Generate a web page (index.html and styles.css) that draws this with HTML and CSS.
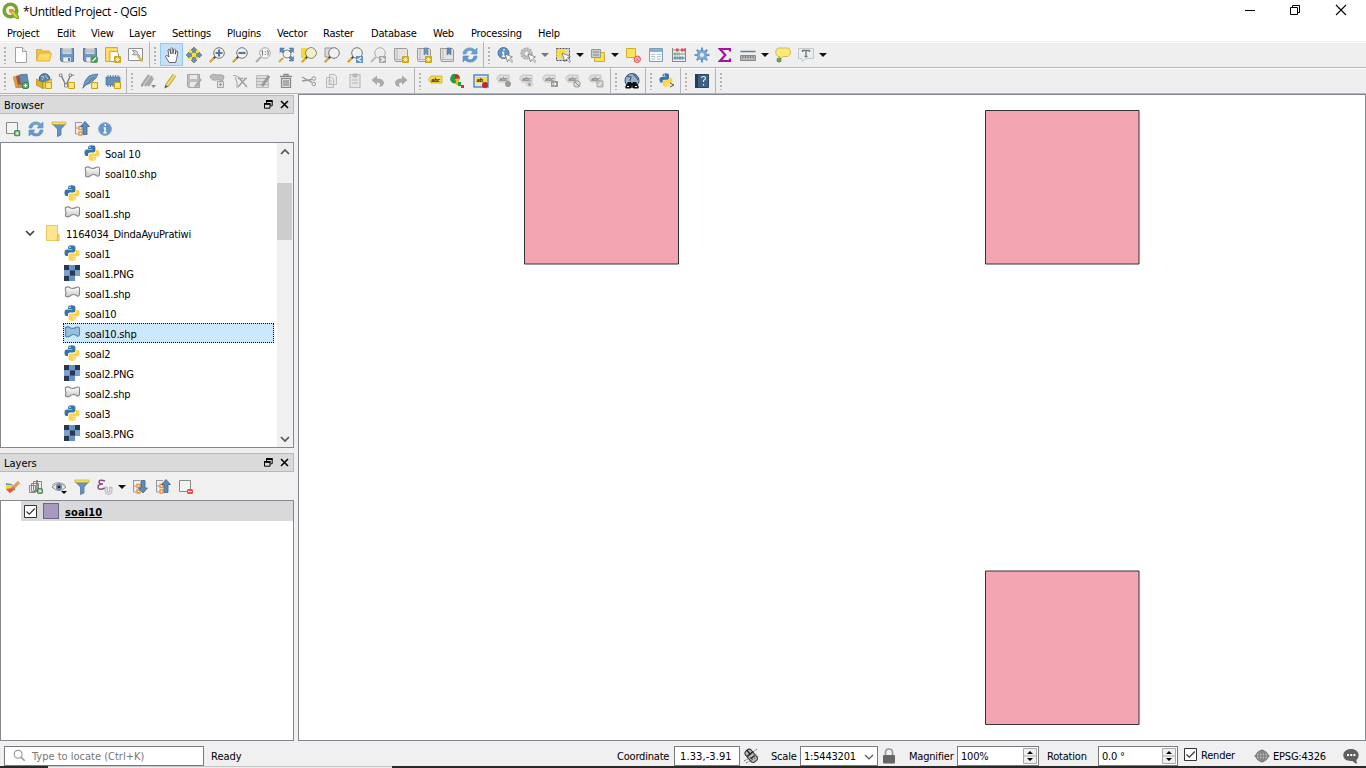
FILE: index.html
```html
<!DOCTYPE html>
<html lang="en">
<head>
<meta charset="utf-8">
<title>*Untitled Project - QGIS</title>
<link rel="stylesheet" href="styles.css">
</head>
<body>
<svg class="sprite" xmlns="http://www.w3.org/2000/svg">
<defs>
<linearGradient id="fade" x2="0" y2="1"><stop stop-color="#fff"/><stop offset="1" stop-color="#c8c8c8"/></linearGradient>
<symbol id="star" viewBox="0 0 7 7"><rect width="7" height="7" rx="1" fill="#c9a51c"/><path d="M3.500 1v5M1 3.500h5M1.800 1.800l3.400 3.400M5.200 1.800L1.800 5.200" stroke="#fff8c0" stroke-width=".8"/></symbol>
<symbol id="ysq" viewBox="0 0 7 7"><rect x=".5" y=".5" width="6" height="6" rx="1" fill="#fbe98c" stroke="#c9a21c" stroke-width="1.200"/></symbol>
<symbol id="plus" viewBox="0 0 7 7"><rect x=".5" y=".5" width="6" height="6" rx="1.500" fill="#6aa66a" stroke="#3f8248"/><path d="M3.500 1.700v3.600M1.700 3.500h3.600" stroke="#fff" stroke-width="1.200"/></symbol>
<symbol id="cursor" viewBox="0 0 10 10"><path d="M1 1l7.500 3-2.600 1.200L9 8.500 8 9.500 4.800 6.300 3.500 8.800z" fill="#fff" stroke="#777" stroke-width=".8"/></symbol>
<symbol id="new" viewBox="0 0 16 16"><path d="M2.500 .5h7L13.500 4.500v11h-11z" fill="#fff" stroke="#a0a0a0"/><path d="M9.500 .5v4h4" fill="#eee" stroke="#a0a0a0"/></symbol>
<symbol id="open" viewBox="0 0 16 16"><path d="M.5 13V2.500h5l1 1.500h7v3" fill="#efc042" stroke="#dcb04a"/><path d="M.5 14L3 6h12.500l-2 8z" fill="#ffd964" stroke="#e2b43c"/></symbol>
<symbol id="save" viewBox="0 0 16 16"><path d="M1.500 1.500h13v13h-12l-1-1z" fill="#6d97c4" stroke="#557b9e"/><path d="M3.500 1h9v6h-9z" fill="#d5d8da"/><path d="M4 10h8v5H4z" fill="#eef0f1" stroke="#7b8e9c" stroke-width=".6"/><path d="M9 11h2v3H9z" fill="#5c7f9e"/><path d="M4 3h8M4 5h8" stroke="#a9b1b6"/></symbol>
<symbol id="saveas" viewBox="0 0 16 16"><use href="#save"/><rect x="9" y="9.500" width="6.500" height="6" rx="1.500" fill="#509650" stroke="#5f9c63"/><path d="M10.500 14.200l3.500-3.500" stroke="#fff" stroke-width="1.300"/></symbol>
<symbol id="savegray" viewBox="0 0 16 16"><path d="M1.500 1.500h12v13h-11l-1-1z" fill="#bdbdbd" stroke="#a5a5a5"/><path d="M4 2h7v4H4zM4 9h7v5H4z" fill="#e9e9e9"/><path d="M9 14l6-8" stroke="#aaa" stroke-width="2.200"/></symbol>
<symbol id="layout" viewBox="0 0 16 16"><path d="M4.500 3.500h6l3 3v8h-9z" fill="#fff" stroke="#999"/><path d="M.5 .5h12v4H5v10H.5z" fill="#f6d75b" stroke="#cfae3a"/><path d="M2 3h1M5 2v1M8 2v1M11 2v1M2 6h1M2 9h1M2 12h1" stroke="#fff"/><use href="#star" x="9" y="9" width="7" height="7"/></symbol>
<symbol id="wrench" viewBox="0 0 16 16"><path d="M.5 1.500h14v12H.5z" fill="#fafafa" stroke="#919191"/><path d="M4.500 3.500l2 2-2 2q3 1 4 0l2 2 1-1-2-2q1-3-5-3z" fill="#ddd" stroke="#777" stroke-width=".8"/><path d="M10 9l4.500 5.500" stroke="#d8b548" stroke-width="2.500"/></symbol>
<symbol id="hand" viewBox="0 0 16 16"><path d="M5.200 15.500l-3.700-6q.4-1.600 2-.6L5 10 4 3q.8-1.500 2 0l1 4-.3-5.400q1-1.500 2 0L9 6.800l.6-4.300q1.300-1 1.900.3l-.2 4.500.9-3q1.500-.8 1.500.8l-1 6.400-1 4z" fill="#fff" stroke="#444" stroke-width=".8"/></symbol>
<symbol id="pan" viewBox="0 0 16 16"><path d="M2.500 2.500h10v10h-10z" fill="#f4df43" transform="rotate(8 8 8)"/><path d="M8 0l3 3H9.500v2.500h-3V3H5zM8 16l3-3H9.500v-2.500h-3V13H5zM0 8l3-3v1.500h2.500v3H3V11zM16 8l-3-3v1.500h-2.500v3H13V11z" fill="#668fb8" stroke="#426585" stroke-width=".5"/></symbol>
<symbol id="lens" viewBox="0 0 16 16"><path d="M6.500 9.500l-2 2" stroke="#444" stroke-width="1.800"/><path d="M4.500 11.500L.8 15.200" stroke="#d6a82c" stroke-width="2.300"/><circle cx="10" cy="6" r="5.300" fill="#f1f1ef" stroke="#777"/></symbol>
<symbol id="zin" viewBox="0 0 16 16"><use href="#lens"/><path d="M10 2.500v7M6.500 6h7" stroke="#56799e" stroke-width="2.200"/></symbol>
<symbol id="zout" viewBox="0 0 16 16"><use href="#lens"/><path d="M6.500 6h7" stroke="#56799e" stroke-width="2.200"/></symbol>
<symbol id="z11" viewBox="0 0 16 16"><path d="M6 10l-5 5" stroke="#aaa" stroke-width="2"/><circle cx="10" cy="6" r="5.300" fill="#f3f3f3" stroke="#aaa"/><path d="M7.500 3.500v5M13 3.500v5M10.300 4.500v1M10.300 7v1M6.500 4h1M12 4h1" stroke="#777"/></symbol>
<symbol id="zfull" viewBox="0 0 16 16"><circle cx="9" cy="7" r="4" fill="#f4f4f4" stroke="#888"/><path d="M5 11l-4 4" stroke="#d6a82c" stroke-width="2"/><path d="M2 1h4.500L5 2.500l1.500 1.500-2 2L3 4.500 2 5.500zM15.500 1h-4.500l1.500 1.500L11 4l2 2 1.500-1.500 1 1zM15.500 14H11l1.500-1.500L11 11l2-2 1.500 1.500 1-1z" fill="#5f8bb5" stroke="#456d92" stroke-width=".5"/></symbol>
<symbol id="zsel" viewBox="0 0 16 16"><path d="M0 1h8v10H0z" fill="#f5d938"/><use href="#lens"/><circle cx="10" cy="6" r="4.700" fill="#f3efc9"/></symbol>
<symbol id="zlay" viewBox="0 0 16 16"><path d="M1 1h7v9H1z" fill="#ddd" stroke="#999"/><use href="#lens"/></symbol>
<symbol id="zlast" viewBox="0 0 16 16"><use href="#lens"/><path d="M9 9h7v7H9z" fill="#6593bf"/><path d="M14.200 10.500l-3.200 2 3.200 2" fill="none" stroke="#fff" stroke-width="1.400"/></symbol>
<symbol id="znext" viewBox="0 0 16 16"><path d="M6 10l-5 5" stroke="#bbb" stroke-width="2"/><circle cx="10" cy="6" r="5.300" fill="#eee" stroke="#aaa"/><path d="M9 9h7v7H9z" fill="#aaa"/><path d="M11 10.500l3 2-3 2" fill="none" stroke="#fff" stroke-width="1.400"/></symbol>
<symbol id="map" viewBox="0 0 16 16"><path d="M1.500 1.500h12l1 1v12h-12l-1-2z" fill="#e3e3e3" stroke="#9a9a9a"/><path d="M4 1.500v11H1.500M4 12.500h10" stroke="#b5b5b5" fill="none"/></symbol>
<symbol id="mapnew" viewBox="0 0 16 16"><use href="#map"/><use href="#star" x="9" y="9" width="7" height="7"/></symbol>
<symbol id="bmnew" viewBox="0 0 16 16"><use href="#mapnew"/><path d="M8 1h4v7l-2-1.500L8 8z" fill="#6f95bc" stroke="#53789b" stroke-width=".6"/></symbol>
<symbol id="bm" viewBox="0 0 16 16"><use href="#map"/><path d="M8 1h4v7l-2-1.500L8 8z" fill="#6389af" stroke="#53789b" stroke-width=".6"/></symbol>
<symbol id="refresh" viewBox="0 0 16 16"><path d="M1 7C1 1 9-1 13 3l2-2v6H9l2-2C8 2 5 3 4 7z" fill="#6da0d3" stroke="#5b8cba" stroke-width=".6"/><path d="M15 9c0 6-8 8-12 4l-2 2V9h6l-2 2c3 3 6 2 7-2z" fill="#6497cb" stroke="#5b8cba" stroke-width=".6"/></symbol>
<symbol id="info" viewBox="0 0 16 16"><circle cx="8" cy="8" r="6.300" fill="#6697ca" stroke="#7f9fc2"/><path d="M8.300 3v2M6.700 7H8v4.500M6.300 11.700h3.400" stroke="#fff" stroke-width="1.500" fill="none"/></symbol>
<symbol id="identify" viewBox="0 0 16 16"><circle cx="6.500" cy="6" r="5.500" fill="#5f91c5" stroke="#5179a0"/><path d="M7 2v1.500M5 5.500h1.500v4M5 9.500h3" stroke="#fff" stroke-width="1.400" fill="none"/><use href="#cursor" x="7" y="6" width="10" height="10"/></symbol>
<symbol id="gearc" viewBox="0 0 16 16"><circle cx="6.500" cy="6.500" r="5.200" fill="#ccc" stroke="#aaa" stroke-width="2" stroke-dasharray="2 1"/><circle cx="6.500" cy="6.500" r="2.800" fill="#eee" stroke="#999"/><use href="#cursor" x="7" y="6" width="10" height="10"/></symbol>
<symbol id="select" viewBox="0 0 16 16"><path d="M1.500 1.500h13v12h-13z" fill="#d9d9d9" stroke="#555" stroke-dasharray="2 1"/><path d="M1.500 2h9v8h-9z" fill="#f8de3c"/><use href="#cursor" x="6" y="5" width="11" height="11"/></symbol>
<symbol id="selform" viewBox="0 0 16 16"><path d="M4.500 5.500h10v9h-10z" fill="#fbe053" stroke="#cdb03b"/><path d="M1.500 2.500h9v8h-9z" fill="#ccc" stroke="#999"/><path d="M3 5h6M3 8h6" stroke="#888"/></symbol>
<symbol id="desel" viewBox="0 0 16 16"><path d="M1.500 1.500h9v9h-9z" fill="#fce450" stroke="#d0ae34"/><circle cx="12.300" cy="12.300" r="3.200" fill="#f8c3c3" stroke="#dc5050"/><path d="M10 14.500l4.500-4.500M10.500 11l3.500 3" stroke="#dc5050" stroke-width=".8"/></symbol>
<symbol id="table" viewBox="0 0 16 16"><path d="M1.500 1.500h13v13h-13z" fill="#f2f7fc" stroke="#7d9dbc"/><path d="M2 2h12v3H2z" fill="#8aafd6"/><path d="M3 7.500h4M9 7.500h4M3 9.500h4M9 9.500h4M3 12h4M9 12h4" stroke="#b8c5cf"/></symbol>
<symbol id="abacus" viewBox="0 0 16 16"><path d="M1.500 1v14M14.500 1v14M1 14.500h14M1 3h14M1 7h14M1 11h14" stroke="#888" fill="none"/><path d="M5 3h3M10 3h4" stroke="#db4a4a" stroke-width="3" stroke-dasharray="2 .5"/><path d="M3 7h6" stroke="#7eb587" stroke-width="3" stroke-dasharray="2 .5"/><path d="M3 11h10" stroke="#6595af" stroke-width="3" stroke-dasharray="2 .5"/></symbol>
<symbol id="gear" viewBox="0 0 16 16"><g stroke="#6796ca" stroke-width="2"><path d="M8 .5v15M.5 8h15M2.700 2.700l10.600 10.600M13.300 2.700L2.700 13.300"/></g><circle cx="8" cy="8" r="4.800" fill="#82add9" stroke="#5b88b7" stroke-width=".7"/><circle cx="8" cy="8" r="2" fill="#e8eef5"/></symbol>
<symbol id="sigma" viewBox="0 0 16 16"><path d="M13 4.500V2H3l5.300 6L3 14h10v-2.500" fill="none" stroke="#a1149c" stroke-width="2.200"/></symbol>
<symbol id="ruler" viewBox="0 0 16 16"><path d="M.5 4.500h15" stroke="#5c7c98" stroke-width="1.500"/><path d="M.5 8.500h15v5H.5z" fill="#b5b5b5" stroke="#888"/><path d="M3 9v2M5.500 9v2M8 9v2M10.500 9v2M13 9v2" stroke="#777"/></symbol>
<symbol id="tip" viewBox="0 0 16 16"><path d="M3 1h10q2.500 1 2.500 4T13 9.500H8l-3 3.500V9.500H3Q.7 8 .7 5T3 1z" fill="#fbe978" stroke="#d2ba52"/><circle cx="4" cy="13" r="2.500" fill="#6c9b55"/></symbol>
<symbol id="text" viewBox="0 0 16 16"><path d="M.5 1.500h15v10H8l-4 3v-3H.5z" fill="#e8edef" stroke="#c2c9cd"/><path d="M4.500 3.500h7M8 3.500v6M6.500 9.500h3M4.500 3v2M11.500 3v2" stroke="#777" stroke-width="1.300"/></symbol>
<symbol id="dsm" viewBox="0 0 16 16"><path d="M0 4l4-1 3 9-4 3z" fill="#e0a13c" stroke="#b67b3a" stroke-width=".5"/><path d="M3 3l7-2 2 9-7 3z" fill="#a94f3f"/><path d="M6 2l8-1 1.500 9L8 12z" fill="#648cb7" stroke="#466c94" stroke-width=".6"/><path d="M3 14l3-3 4 2v2H5z" fill="#d58b3b"/><use href="#plus" x="9" y="9" width="7" height="7"/></symbol>
<symbol id="gpkg" viewBox="0 0 16 16"><circle cx="8.500" cy="6" r="5.300" fill="#5784ad" stroke="#365b7d"/><path d="M5 3l3 1-2 3M9 2l3 4" stroke="#b6cfe1" fill="none"/><path d="M0 6l7 3.500v6L0 12z" fill="#e0b22c" stroke="#9b7a23" stroke-width=".6"/><path d="M7 9.500L16 6v6l-9 3.500z" fill="#f1cf4b" stroke="#a9841d" stroke-width=".6"/><use href="#ysq" x="9" y="9" width="7" height="7"/></symbol>
<symbol id="vlay" viewBox="0 0 16 16"><path d="M2 2l5 10.500 4-9q1-1.500 4-1.500" stroke="#66727c" fill="none" stroke-width="1.200"/><path d="M.5 1h2.500v2.500H.5zM5.500 11h3v3h-3zM10 1h2.500v2.500H10z" fill="#eee" stroke="#777" stroke-width=".8"/><use href="#ysq" x="9" y="9" width="7" height="7"/></symbol>
<symbol id="feather" viewBox="0 0 16 16"><path d="M1 15Q2 7 7 3q4-2 9-2-1 4-5 7-3 3-8 4z" fill="#6e9ac6" stroke="#456f98" stroke-width=".7"/><path d="M.5 15.500L12 4" stroke="#48698a" stroke-width=".7"/><use href="#ysq" x="9" y="9" width="7" height="7"/></symbol>
<symbol id="chip" viewBox="0 0 16 16"><path d="M3 2v12M5.500 2v12M8 2v12M10.500 2v12M13 2v12" stroke="#65849e"/><path d="M1 4h14v8H1z" fill="#6590bc" stroke="#4b769f" stroke-width=".7"/><use href="#ysq" x="9" y="9" width="7" height="7"/></symbol>
<symbol id="edits" viewBox="0 0 16 16"><path d="M2 12l7-10M5 13l7-10M8 13l5-8" stroke="#aaa" stroke-width="2.500"/><path d="M1 14l.5-3 2 1.500z" fill="#888"/><path d="M11 12h5l-2.500 3z" fill="#888"/></symbol>
<symbol id="pencil" viewBox="0 0 16 16"><path d="M4 12.500L11.500 2" stroke="#b89a34" stroke-width="4"/><path d="M4 12.500L11.500 2" stroke="#f2dc66" stroke-width="2.300"/><path d="M1.500 15.500l.7-4 3.200 2.300z" fill="#666"/></symbol>
<symbol id="poly" viewBox="0 0 16 16"><path d="M1 3q3-3 7-1 4-1 7 1 0 3-2 5-3-2-6-1-5 1-6-4z" fill="#bbb" stroke="#a5a5a5"/><path d="M8.500 8.500h6v6h-6z" fill="#e3e3e3" stroke="#a5a5a5"/><path d="M10 11.500h3M11.500 10v3" stroke="#999"/></symbol>
<symbol id="node" viewBox="0 0 16 16"><path d="M1 2.500h3M3 4l2 5 0 6M4 3l4 2" fill="none" stroke="#b0b0b0" stroke-width="1.200"/><path d="M7 5l8 9M14 5l-8 9M6 5.500h5M12 5.500h3" fill="none" stroke="#a5a5a5" stroke-width="1.700"/></symbol>
<symbol id="attr" viewBox="0 0 16 16"><path d="M1.500 2.500h12v12h-12z" fill="#ddd" stroke="#bbb"/><path d="M1 5.500h12M1 8.500h12M1 11.500h12" stroke="#b5b5b5" stroke-width="1.200"/><path d="M7 13l7-10" stroke="#999" stroke-width="3"/></symbol>
<symbol id="trash" viewBox="0 0 16 16"><path d="M2 3.500h12M6 3V1.500h4V3" fill="none" stroke="#888" stroke-width="1.300"/><path d="M3.500 5.500h9v9h-9zM6 7v6M8 7v6M10 7v6" fill="#ddd" stroke="#888" stroke-width="1.200"/></symbol>
<symbol id="cut" viewBox="0 0 16 16"><path d="M1 4l10 5.500M1 8l10-1.500" stroke="#999" stroke-width="1.300"/><circle cx="12.800" cy="5.500" r="1.800" fill="none" stroke="#999"/><circle cx="12.800" cy="11" r="1.800" fill="none" stroke="#999"/></symbol>
<symbol id="copy" viewBox="0 0 16 16"><path d="M5.500 1.500h5l2 2v8h-7zM2.500 4.500h5l2 2v8h-7z" fill="#e9e9e9" stroke="#bbb"/><path d="M4 8h4M4 11h4" stroke="#bbb"/></symbol>
<symbol id="paste" viewBox="0 0 16 16"><path d="M3 1.500h10v13H3z" fill="#e7e7e7" stroke="#bbb" stroke-width="1.200"/><path d="M6 1h4v3H6zM5 7h6M5 10h6" stroke="#b5b5b5" fill="#bbb"/></symbol>
<symbol id="undo" viewBox="0 0 16 16"><path d="M1.500 7l5.500-4.500v3q7 0 7 5-1 3-5 3.500 3-4.500-2-4.500v2.500z" fill="#aaa"/></symbol>
<symbol id="tag" viewBox="0 0 16 16"><path d="M4 3h11v7H4L1.500 6.500z" fill="#f7dc4a" stroke="#d3b83b"/><text x="4" y="8.500" font-size="5.500" class="abc">abc</text></symbol>
<symbol id="gtag" viewBox="0 0 16 16"><path d="M3 2h10v7H3L.5 5.500z" fill="#ddd" stroke="#c4c4c4"/><text x="3" y="7.500" font-size="5.500" class="abc dim">abc</text></symbol>
<symbol id="diagram" viewBox="0 0 16 16"><path d="M5 6V1.500A4.500 4.500 0 1 0 8 9z" fill="#2e9a46"/><path d="M1 3q2-3 4-2v5z" fill="#2e9a46"/><path d="M5 6V1q5 0 5 5l-3 2z" fill="#c42d2d"/><path d="M5 6l5-1-3 5z" fill="#e3ba21"/><path d="M6 7h3v5H6z" fill="#e6b91c"/><path d="M8 9h3v4H8z" fill="#2e9a46"/><path d="M11 12h3v3h-3z" fill="#c33"/></symbol>
<symbol id="pinlab" viewBox="0 0 16 16"><path d="M1 2h14v12H1z" fill="#d8e7fa" stroke="#598bc1" stroke-width="1.500"/><path d="M3 4h11v6H3z" fill="#f6db40"/><text x="3.500" y="9" font-size="5.500" class="abc">ab</text><circle cx="12" cy="12" r="3" fill="#bd2933"/></symbol>
<symbol id="eye" viewBox="0 0 16 16"><path d="M1 8q7-7 14 0-7 7-14 0z" fill="#eee" stroke="#888"/><circle cx="8" cy="8" r="3.200" fill="#6d90b1"/><circle cx="8" cy="8" r="1.300" fill="#222"/><path d="M1 6q6-5 13 0" fill="none" stroke="#aaa"/></symbol>
<symbol id="meta" viewBox="0 0 16 16"><circle cx="8" cy="7.500" r="7" fill="#9ab4cf" stroke="#354f6b"/><path d="M3 3l4 1-1 4M9 1l3 3 2 3" stroke="#49657f" fill="none" stroke-width="1.300"/><path d="M4 9h3l1 1.500L9 9h3l3 5-1 1.500H9.500L8 13l-1.500 2.500H2L1 14z" fill="#111"/><path d="M3 13.500h2M11 13.500h2" stroke="#fff"/></symbol>
<symbol id="python" viewBox="0 0 16 16"><path d="M7.800.3q3.600 0 3.600 2v3.500q0 1.800-2 1.800H6Q4 7.600 4 9.600V11H2.500Q.5 11 .5 7.800t2.300-3.200h5.400V4H4.100V2.300Q4.100.3 7.800.3z" fill="#3774a8"/><path d="M8.200 15.700q-3.600 0-3.600-2v-3.500q0-1.800 2-1.800H10q2 0 2-2V5h1.500q2 0 2 3.200t-2.300 3.200H7.800v.6h4.100v1.700q0 2-3.700 2z" fill="#ffd342"/><circle cx="6" cy="2.300" r=".75" fill="#fff"/><circle cx="10" cy="13.700" r=".75" fill="#fff"/></symbol>
<symbol id="help" viewBox="0 0 16 16"><path d="M1.500 1.500h13v13h-13z" fill="#3b6285" stroke="#2b4962"/><path d="M1 1h3v14H1z" fill="#233d56"/><path d="M7.500 5q0-1.500 2-1.500t2 1.500-2 2.500v1.500M9.500 11v1.500" stroke="#e5ecf2" fill="none" stroke-width="1.200"/></symbol>
<symbol id="box" viewBox="0 0 16 16"><path d="M1.500 1.500h11v11h-11z" fill="#f4f4f2" stroke="#8b8b85"/></symbol>
<symbol id="boxadd" viewBox="0 0 16 16"><use href="#box"/><use href="#plus" x="9" y="9" width="6.500" height="6.500"/></symbol>
<symbol id="boxrem" viewBox="0 0 16 16"><use href="#box"/><rect x="9" y="10" width="6" height="5" rx="1.500" fill="#e84c55"/><path d="M10 12.500h4" stroke="#fff"/></symbol>
<symbol id="filter" viewBox="0 0 16 16"><path d="M1.500 3h13L10 8v6l-3.500 1.500V8z" fill="#6594c4" stroke="#4a76a2" stroke-width=".8"/><path d="M1 1h14v2.500H1z" fill="#f7e35a" stroke="#b5a13e" stroke-width=".6"/></symbol>
<symbol id="tree" viewBox="0 0 16 16"><path d="M1 1.500h7M1.500 2v11h3M1.500 7h3" fill="none" stroke="#999"/><path d="M5 5.500h3v3H5zM5 11h3v3H5z" fill="#fff" stroke="#ee923b" stroke-width="1.400"/></symbol>
<symbol id="collapse" viewBox="0 0 16 16"><use href="#tree"/><path d="M11 .5l4.500 5H13v8H9v-8H6.500z" fill="#5f8bb6" stroke="#37648e" stroke-width=".8"/></symbol>
<symbol id="expand" viewBox="0 0 16 16"><use href="#tree"/><path d="M11 14l4.500-5H13V1.500H9V9H6.500z" fill="#5f8bb6" stroke="#37648e" stroke-width=".8"/></symbol>
<symbol id="shape" viewBox="0 0 16 16"><path d="M1.500 2.500Q4 1 6.500 3q3 1 6-.8 3-.7 3 1.300v6q-.5 2-2 1.800-2-1.800-4-1.800-2 0-4 1.800-2 1-3.500.2-1-1 0-3.500-1-3.500-.5-5.500z" fill="url(#fade)" stroke="#858585" stroke-width="1.100"/></symbol>
<symbol id="shapesel" viewBox="0 0 16 16"><path d="M1.500 2.500Q4 1 6.500 3q3 1 6-.8 3-.7 3 1.300v6q-.5 2-2 1.800-2-1.800-4-1.800-2 0-4 1.800-2 1-3.500.2-1-1 0-3.500-1-3.500-.5-5.500z" fill="#96c0e2" stroke="#5284ad" stroke-width="1.100"/></symbol>
<symbol id="raster" viewBox="0 0 16 16"><path d="M0 0h16v16H0z" fill="#6892c3"/><path d="M0 0h5v5H0zM11 0h5v5h-5zM6 5.500h5v5H6zM0 11h5v5H0z" fill="#28384f"/><path d="M0 5.500h5.500v5H0zM11 5.500h5v5h-5z" fill="#7ea1cd"/><path d="M11 11h5v5h-5z" fill="#fff"/></symbol>
<symbol id="folder" viewBox="0 0 16 16"><path d="M1.500.5h11v15h-11z" fill="#ffe592" stroke="#ecc75a"/><path d="M12.500 9.500h1.500v6h-2.500l1-2z" fill="#ffe592" stroke="#dfb94b"/></symbol>
<symbol id="brush" viewBox="0 0 16 16"><path d="M1 4l6 1 3 5-5 4-4-4z" fill="#669bc8"/><path d="M1 6l6 0 2 4-5 3-3-3z" fill="#f8d838"/><path d="M1 10l7-1 2 1-5 4z" fill="#e4593c"/><path d="M8 9l6-6" stroke="#d99f66" stroke-width="3.200"/><path d="M7 8l3 3" stroke="#c3794f" stroke-width="1.500"/></symbol>
<symbol id="group" viewBox="0 0 16 16"><path d="M5.500 2.500h8v9h-8zM3.500 4.500h7v8h-7zM1.500 6.500h6v7h-6z" fill="none" stroke="#888"/><path d="M9 1v11" stroke="#777" stroke-width="1.500"/><use href="#plus" x="9" y="9" width="6" height="6"/></symbol>
<symbol id="epsilon" viewBox="0 0 16 16"><path d="M8 2Q2 0 2 3q0 2 4 2-5 0-5 3 0 4 7 1" fill="none" stroke="#805082" stroke-width="1.500"/><path d="M8 8h2.500v5h2V8H15v4q0 3.500-3.500 3.500T8 12z" fill="#ddd" stroke="#aaa" stroke-width=".7"/></symbol>
<symbol id="lock" viewBox="0 0 16 16"><path d="M4.500 8V4.500Q4.500 1 8 1t3.500 3.500V8" fill="none" stroke="#999" stroke-width="1.700"/><rect x="2" y="7" width="12" height="8.500" rx="1" fill="#666"/></symbol>
<symbol id="mouse" viewBox="0 0 16 16"><g transform="rotate(-40 8 8)"><rect x="4.500" y="1" width="7.500" height="14" rx="3" fill="#bbb" stroke="#333"/><path d="M5 6h7M8.500 1v5M6 10h5" stroke="#222" stroke-width="1.400"/></g><path d="M1 13l13-7M3 15l13-7M10 4l4-3" stroke="#666" stroke-dasharray="2 1"/></symbol>
<symbol id="globe" viewBox="0 0 16 16"><path d="M8 1l8 7-8 7-8-7z" fill="#999"/><ellipse cx="8" cy="8" rx="6" ry="5.500" fill="#bbb" stroke="#777"/><ellipse cx="8" cy="8" rx="3" ry="5.500" fill="none" stroke="#777"/><path d="M1 8h14M3 5h10M3 11h10M8 2v12" stroke="#777"/></symbol>
<symbol id="bubble" viewBox="0 0 16 16"><path d="M8 1C3.500 1 .3 3.500.3 7.300S3.500 13 8 13h1.500q2 2.500 5 2.500-1.500-1.500-1-3.500 2.200-2 2.200-4.700C15.700 3.500 12.500 1 8 1z" fill="#606060"/><path d="M4 6h2v2H4zM7.200 6h2v2h-2zM10.400 6h2v2h-2z" fill="#fff"/></symbol>
<symbol id="dock" viewBox="0 0 9 9"><path d="M2.500 3V.8h5.700v5H6.500" fill="none" stroke="#000"/><path d="M2 1h6.500" stroke="#000" stroke-width="2"/><path d="M.5 3.500h5.500v4.700H.5z" fill="#dadada" stroke="#000"/><path d="M0 4h6.500" stroke="#000" stroke-width="1.700"/></symbol>
<symbol id="x" viewBox="0 0 9 9"><path d="M1 1l7 7M8 1L1 8" stroke="#000" stroke-width="1.500"/></symbol>
<symbol id="check" viewBox="0 0 13 13"><path d="M.5.5h12v12H.5z" fill="#fff" stroke="#333"/><path d="M2.500 6.500l2.800 2.700L10.800 3.500" fill="none" stroke="#333" stroke-width="1.200"/></symbol>
</defs>
</svg>

<div class="window">
<header class="titlebar">
<svg class="logo" viewBox="0 0 18 18"><circle cx="8.500" cy="8.500" r="6.300" fill="#f5f5e5" stroke="#76a435" stroke-width="3.600"/><path d="M9 9h4l4 5v3h-3L9 12z" fill="#8ab43c"/><path d="M7 7h4l2 2-3 3-3-2z" fill="#ec9333"/><path d="M10 10l5 5" stroke="#f3d34c" stroke-width="1.500"/></svg>
<span class="title">*Untitled Project - QGIS</span>
<svg class="controls" viewBox="0 0 110 20"><path d="M4 10.500h10" stroke="#000"/><path d="M51.500 7V5.500h7v7H57" fill="none" stroke="#000"/><path d="M49.500 7.500h7v7h-7z" fill="none" stroke="#000"/><path d="M95 5l10 10M105 5L95 15" stroke="#000" stroke-width="1.100"/></svg>
</header>
<nav class="menubar"><span>Project</span><span>Edit</span><span>View</span><span>Layer</span><span>Settings</span><span>Plugins</span><span>Vector</span><span>Raster</span><span>Database</span><span>Web</span><span>Processing</span><span>Help</span></nav>

<div class="toolbar">
<div class="group"><i><svg><use href="#new"/></svg></i><i><svg><use href="#open"/></svg></i><i><svg><use href="#save"/></svg></i><i><svg><use href="#saveas"/></svg></i><i><svg><use href="#layout"/></svg></i><i><svg><use href="#wrench"/></svg></i></div>
<div class="group"><i class="active"><svg><use href="#hand"/></svg></i><i><svg><use href="#pan"/></svg></i><i><svg><use href="#zin"/></svg></i><i><svg><use href="#zout"/></svg></i><i><svg><use href="#z11"/></svg></i><i><svg><use href="#zfull"/></svg></i><i><svg><use href="#zsel"/></svg></i><i><svg><use href="#zlay"/></svg></i><i><svg><use href="#zlast"/></svg></i><i><svg><use href="#znext"/></svg></i><i><svg><use href="#mapnew"/></svg></i><i><svg><use href="#bmnew"/></svg></i><i><svg><use href="#bm"/></svg></i><i><svg><use href="#refresh"/></svg></i></div>
<div class="group last"><i><svg><use href="#identify"/></svg></i><i><svg><use href="#gearc"/></svg></i><b class="arrow faint"></b><i><svg><use href="#select"/></svg></i><b class="arrow"></b><i><svg><use href="#selform"/></svg></i><b class="arrow"></b><i><svg><use href="#desel"/></svg></i><i><svg><use href="#table"/></svg></i><i><svg><use href="#abacus"/></svg></i><i><svg><use href="#gear"/></svg></i><i><svg><use href="#sigma"/></svg></i><i><svg><use href="#ruler"/></svg></i><b class="arrow"></b><i><svg><use href="#tip"/></svg></i><i><svg><use href="#text"/></svg></i><b class="arrow"></b></div>
</div>
<div class="toolbar second">
<div class="group"><i><svg><use href="#dsm"/></svg></i><i><svg><use href="#gpkg"/></svg></i><i><svg><use href="#vlay"/></svg></i><i><svg><use href="#feather"/></svg></i><i><svg><use href="#chip"/></svg></i></div>
<div class="group"><i><svg><use href="#edits"/></svg></i><i><svg><use href="#pencil"/></svg></i><i><svg><use href="#savegray"/></svg></i><i><svg><use href="#poly"/></svg></i><i><svg><use href="#node"/></svg></i><i><svg><use href="#attr"/></svg></i><i><svg><use href="#trash"/></svg></i><i><svg><use href="#cut"/></svg></i><i><svg><use href="#copy"/></svg></i><i><svg><use href="#paste"/></svg></i><i><svg><use href="#undo"/></svg></i><i class="flip"><svg><use href="#undo"/></svg></i></div>
<div class="group labels"><i><svg><use href="#tag"/></svg></i><i><svg><use href="#diagram"/></svg></i><i><svg><use href="#pinlab"/></svg></i><i><svg viewBox="0 0 16 16"><use href="#gtag"/><circle cx="12" cy="11" r="3" fill="#999"/></svg></i><i><svg viewBox="0 0 16 16"><use href="#gtag"/><use href="#eye" x="6" y="7" width="9" height="9" class="gray"/></svg></i><i><svg viewBox="0 0 16 16"><use href="#gtag"/><path d="M9 8h7v6H9z" fill="#999"/><path d="M10 11h4M12.500 9.500L14 11l-1.500 1.500" stroke="#fff" fill="none"/></svg></i><i><svg viewBox="0 0 16 16"><use href="#gtag"/><rect x="9" y="8" width="6" height="6" rx="2" fill="#ddd" stroke="#999"/><path d="M10 9l4 4" stroke="#888"/></svg></i><i><svg viewBox="0 0 16 16"><use href="#gtag"/><path d="M9 8h6v6H9z" fill="#ccc" stroke="#aaa"/><path d="M10.500 12.500l3-3" stroke="#fff"/></svg></i></div>
<div class="group"><i><svg><use href="#meta"/></svg></i></div>
<div class="group"><i><svg viewBox="0 0 16 16"><use href="#python" width="14" height="14"/><path d="M11 10l4 2-4 2" fill="none" stroke="#555"/></svg></i></div>
<div class="group"><i><svg><use href="#help"/></svg></i></div>
<div class="group last"></div>
</div>

<main class="workspace">
<aside class="docks">
<section class="dock browser">
<h2 class="dock-title"><span>Browser</span><svg><use href="#dock"/></svg><svg><use href="#x"/></svg></h2>
<div class="dock-tools"><i><svg><use href="#boxadd"/></svg></i><i><svg><use href="#refresh"/></svg></i><i><svg><use href="#filter"/></svg></i><i><svg><use href="#collapse"/></svg></i><i><svg><use href="#info"/></svg></i></div>
<div class="tree-frame">
<ul class="tree">
<li class="deep"><svg><use href="#python"/></svg><span>Soal 10</span></li>
<li class="deep"><svg><use href="#shape"/></svg><span>soal10.shp</span></li>
<li><svg><use href="#python"/></svg><span>soal1</span></li>
<li><svg><use href="#shape"/></svg><span>soal1.shp</span></li>
<li class="dir"><svg class="chevron" viewBox="0 0 10 10"><path d="M1 3l4 4 4-4" fill="none" stroke="#444" stroke-width="1.700"/></svg><svg><use href="#folder"/></svg><span>1164034_DindaAyuPratiwi</span></li>
<li><svg><use href="#python"/></svg><span>soal1</span></li>
<li><svg><use href="#raster"/></svg><span>soal1.PNG</span></li>
<li><svg><use href="#shape"/></svg><span>soal1.shp</span></li>
<li><svg><use href="#python"/></svg><span>soal10</span></li>
<li class="selected"><svg><use href="#shapesel"/></svg><span>soal10.shp</span></li>
<li><svg><use href="#python"/></svg><span>soal2</span></li>
<li><svg><use href="#raster"/></svg><span>soal2.PNG</span></li>
<li><svg><use href="#shape"/></svg><span>soal2.shp</span></li>
<li><svg><use href="#python"/></svg><span>soal3</span></li>
<li><svg><use href="#raster"/></svg><span>soal3.PNG</span></li>
</ul>
<div class="scrollbar"><svg viewBox="0 0 10 10"><path d="M1 7l4-4 4 4" fill="none" stroke="#555" stroke-width="1.700"/></svg><div class="thumb"></div><svg viewBox="0 0 10 10"><path d="M1 3l4 4 4-4" fill="none" stroke="#555" stroke-width="1.700"/></svg></div>
</div>
</section>
<section class="dock layers">
<h2 class="dock-title"><span>Layers</span><svg><use href="#dock"/></svg><svg><use href="#x"/></svg></h2>
<div class="dock-tools"><i><svg><use href="#brush"/></svg></i><i><svg><use href="#group"/></svg></i><i><svg viewBox="0 0 16 16"><use href="#eye"/><path d="M10 12h6l-3 3z"/></svg></i><i><svg><use href="#filter"/></svg></i><i><svg><use href="#epsilon"/></svg></i><b class="arrow"></b><i><svg><use href="#expand"/></svg></i><i><svg><use href="#collapse"/></svg></i><i><svg><use href="#boxrem"/></svg></i></div>
<div class="layer-list"><div class="layer"><svg class="check"><use href="#check"/></svg><span class="swatch"></span><strong>soal10</strong></div></div>
</section>
</aside>
<section class="canvas"><svg viewBox="299 95 1066 645"><g fill="#f3a6b2" stroke="#333"><path d="M524.500 110.500h154v153.500h-154zM985.500 110.500h153.500v153.500h-153.500zM985.500 571h153.500v153.500h-153.500z"/></g></svg></section>
</main>

<footer class="statusbar">
<div class="locator"><svg viewBox="0 0 16 16"><circle cx="7" cy="6" r="4.500" fill="none" stroke="#999" stroke-width="1.300"/><path d="M10 9l4.500 4.500" stroke="#999" stroke-width="1.800"/></svg><span>Type to locate (Ctrl+K)</span></div>
<span class="ready">Ready</span>
<span class="coord-label">Coordinate</span><div class="field coord">1.33,-3.91</div>
<svg class="ic"><use href="#mouse"/></svg>
<span class="scale-label">Scale</span><div class="field scale"><span>1:5443201</span><svg viewBox="0 0 10 10"><path d="M1 3l4 4 4-4" fill="none" stroke="#555" stroke-width="1.200"/></svg></div>
<svg class="ic lock"><use href="#lock"/></svg>
<span class="mag-label">Magnifier</span><div class="field spin"><span>100%</span><svg viewBox="0 0 14 16"><path d="M.5.500h13v15H.5zM1 8h12" fill="#f0f0f0" stroke="#aaa"/><path d="M4 6l3-3 3 3zM4 10h6l-3 3z"/></svg></div>
<span class="rot-label">Rotation</span><div class="field spin rot"><span>0.0 °</span><svg viewBox="0 0 14 16"><path d="M.5.500h13v15H.5zM1 8h12" fill="#f0f0f0" stroke="#aaa"/><path d="M4 6l3-3 3 3zM4 10h6l-3 3z"/></svg></div>
<svg class="check render"><use href="#check"/></svg><span class="render-label">Render</span>
<svg class="ic globe"><use href="#globe"/></svg><span class="epsg">EPSG:4326</span>
<svg class="ic"><use href="#bubble"/></svg>
</footer>
<div class="taskline"><span></span><span></span><span></span></div>
</div>
</body>
</html>
```
FILE: styles.css
```css
* { box-sizing: border-box; }
body { margin: 0; overflow: hidden; background: #fff; color: #000; font: 11px/16px "DejaVu Sans Condensed", "DejaVu Sans", "Noto Sans", sans-serif; letter-spacing: -0.2px; }
svg { display: block; flex: none; }
.sprite { position: absolute; width: 0; height: 0; }
.abc { font-family: "DejaVu Sans Condensed", sans-serif; font-weight: bold; letter-spacing: -0.4px; fill: #333; }
.abc.dim { fill: #888; }
.gray { filter: grayscale(1) opacity(.55); }

.window { display: flex; flex-direction: column; width: 1366px; height: 768px; }
.titlebar { display: flex; align-items: center; height: 23px; padding-left: 2px; }
.logo { width: 18px; height: 18px; margin: 0 3px 1px 0; }
.title { font: 12px/22px "Open Sans", "Noto Sans", sans-serif; letter-spacing: -0.33px; flex: 1; }
.controls { width: 110px; height: 20px; margin: -3px 15px 0 0; }
.menubar { display: grid; grid-template-columns: 50px 34px 38px 43px 55px 50px 46px 48px 62px 38px 67px auto; height: 18px; padding: 3px 0 0 7px; }

.toolbar { display: flex; height: 27px; background: #efefef; border-top: 1px solid #f0f0f0; border-bottom: 1px solid #b5b5b5; box-shadow: inset 0 1px #fff; }
.toolbar.second { height: 26px; border-top: 0; }
.group { display: flex; padding: 1px 1px 0 10px; border-right: 1px solid #b5b5b5; position: relative; }
.group.last { border: 0; }
.group::before { content: ""; position: absolute; left: 4px; top: 5px; width: 2px; height: 17px; background: repeating-linear-gradient(#b5b5b5 0 2px, transparent 2px 4px); }
.group i { width: 23px; height: 23px; padding: 4px 0 0 3px; }
.group.labels i { padding-left: 2px; }
i svg { width: 16px; height: 16px; }
.group i.active { padding: 3px 0 0 3px; background: #c5e0f7; border: 1px solid #90c8f6; }
.flip svg { transform: scaleX(-1); }
.arrow { width: 12px; height: 23px; display: flex; align-items: center; justify-content: center; }
.arrow::before { content: ""; border: 4px solid transparent; border-top-color: #111; border-bottom: 0; margin-right: 3px; }
.arrow.faint::before { border-top-color: #777; }

.workspace { display: flex; height: 647px; background: #f0f0f0; }
.docks { width: 298px; padding-right: 4px; display: flex; flex-direction: column; }
.dock.browser { height: 354px; padding-top: 1px; margin-bottom: 5px; }
.dock-title { display: flex; align-items: center; height: 19px; margin: 0; padding: 3px 4px 0 4px; border: 1px solid #b8b8b8; border-left-width: 0; background: #dadada; font-size: 11px; font-weight: normal; line-height: 16px; letter-spacing: 0; }
.dock-title span { flex: 1; }
.dock-title svg { width: 9px; height: 9px; margin-left: 7px; margin-top: -4px; }
.dock-tools { display: flex; height: 28px; padding: 7px 0 0 5px; }
.dock-tools i { width: 23px; height: 16px; }
.dock-tools .arrow { height: 16px; justify-content: flex-start; }
.dock-tools .arrow::before { margin-left: -2px; }
.tree-frame { display: flex; height: 306px; border: 1px solid #828790; background: #fff; }
.tree { flex: 1; margin: 0; padding: 1px 3px 0 0; list-style: none; }
.tree li { display: flex; height: 20px; padding-left: 63px; }
.tree li.deep { padding-left: 83px; }
.tree li.dir { padding-left: 24px; }
.tree li svg { width: 16px; height: 16px; margin-top: 1px; }
.tree li .chevron { width: 10px; height: 10px; margin: 4px 10px 0 0; }
.tree li span { padding: 3px 0 0 5px; }
.tree li.selected { margin: -1px 0 1px 62px; padding-left: 0; background: #cce8ff; border: 1px dotted #000; }
.tree li.selected svg { margin-top: 1px; }
.tree li.selected span { padding-top: 3px; }
.scrollbar { width: 16px; background: #f0f0f0; display: flex; flex-direction: column; align-items: center; padding: 4px 1px 3px 0; }
.scrollbar svg { width: 10px; height: 10px; }
.thumb { width: 15px; height: 57px; background: #cdcdcd; margin: 26px 0 auto; }
.layer-list { height: 241px; background: #fff; border: 1px solid #828790; }
.layer { display: flex; align-items: center; height: 20px; margin-left: 20px; padding-left: 3px; background: #d9d9d9; }
.check { width: 13px; height: 13px; }
.swatch { width: 16px; height: 16px; margin: 0 6px 0 6px; background: #a999bf; border: 1px solid #6d6684; }
.layer strong { text-decoration: underline; padding-top: 3px; letter-spacing: 0.1px; }
.canvas { width: 1068px; border: 1px solid #828790; background: #fff; }
.canvas svg { width: 1066px; height: 645px; }

.statusbar { display: flex; align-items: center; height: 25px; padding: 4px 5px 0 4px; background: #f0f0f0; }
.statusbar > * { flex: none; }
.statusbar > span { padding-top: 2px; white-space: nowrap; }
.locator, .field { display: flex; align-items: center; height: 20px; background: #fff; border: 1px solid #7a7a7a; padding-top: 2px; }
.locator { width: 200px; padding-left: 7px; color: #777; letter-spacing: 0; }
.locator svg { width: 14px; height: 14px; margin: -2px 6px 0 0; }
.ready { width: 406px; margin-left: 7px; letter-spacing: 0; }
.coord-label { width: 57px; }
.field { padding-left: 3px; }
.coord { width: 66px; padding-left: 5px; letter-spacing: 0.1px; }
.ic { width: 16px; height: 16px; margin-left: 3px; }
.scale-label { width: 29px; margin-left: 12px; }
.scale { width: 78px; justify-content: space-between; padding-right: 3px; letter-spacing: -0.2px; }
.scale svg { width: 10px; height: 10px; }
.lock { margin-left: 3px; }
.mag-label { width: 48px; margin-left: 12px; }
.spin { width: 82px; justify-content: space-between; padding-right: 1px; }
.spin svg { width: 14px; height: 16px; margin-top: -1px; }
.rot-label { width: 51px; margin-left: 8px; }
.rot { width: 80px; }
.render { margin: -2px 0 0 6px; }
.statusbar > .render-label { width: 50px; margin-left: 4px; padding-top: 0; }
.globe { margin-left: 3px; }
.epsg { width: 67px; margin-left: 3px; }
.taskline { display: grid; grid-template-columns: 48px 344px 974px; height: 2px; }
.taskline span { background: #292929; }
.taskline span:nth-child(2) { background: #c4c4c4; border-bottom: 1px solid #eee; }
```
